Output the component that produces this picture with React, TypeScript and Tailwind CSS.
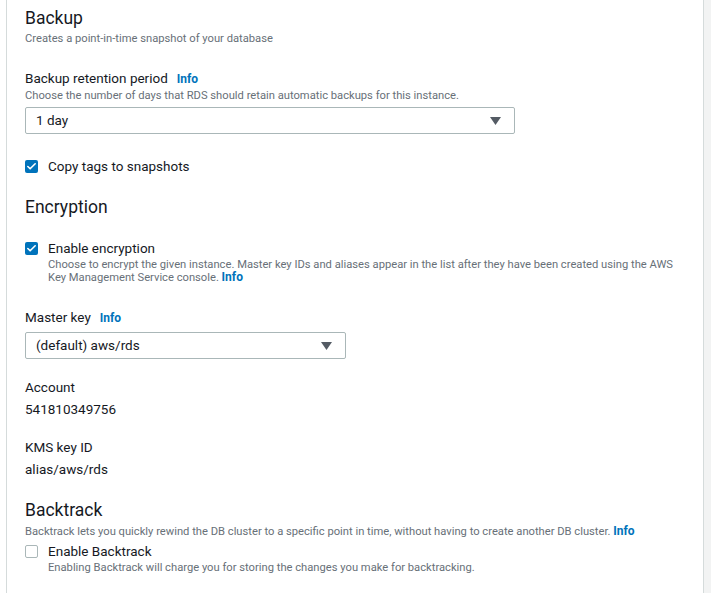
import { Check } from 'lucide-react'

const FONT = { fontFamily: 'Roboto, "Open Sans", Arial, sans-serif' }

function Info({ className = '' }: { className?: string }) {
  return <span className={`text-[12px] font-bold text-[#0073bb] ${className}`}>Info</span>
}

function Select({ value, width }: { value: string; width: string }) {
  return (
    <div
      className={`${width} h-[27px] border border-[#aab7b8] rounded-[2px] flex items-center pl-[10px] pr-[13px] text-[13.5px] text-[#16191f]`}
    >
      <span className="flex-1">{value}</span>
      <svg width="11" height="8" viewBox="0 0 11 8">
        <path d="M0 0 L11 0 L5.5 8 Z" fill="#545b64" />
      </svg>
    </div>
  )
}

function Checkbox({ checked }: { checked: boolean }) {
  return checked ? (
    <div className="w-[13px] h-[13px] rounded-[2px] bg-[#0073bb] flex items-center justify-center shrink-0">
      <Check size={11} strokeWidth={3.5} color="white" />
    </div>
  ) : (
    <div className="w-[13px] h-[13px] rounded-[2px] border border-[#aab7b8] bg-white shrink-0" />
  )
}

export default function App() {
  return (
    <div className="w-[711px] h-[593px] bg-[#f2f3f3] flex overflow-hidden" style={FONT}>
      <div className="w-[6px] bg-white" />
      <div className="w-[698px] h-full bg-white border-x border-[#d5dbdb] pl-[18px] text-[#16191f]">
        {/* Backup */}
        <h2 className="text-[17.5px] leading-[22px] mt-[7px]">Backup</h2>
        <p className="text-[11.2px] leading-[16px] text-[#687078] mt-[2px]">
          Creates a point-in-time snapshot of your database
        </p>

        <div className="mt-[22px] flex items-baseline gap-[9px] text-[13.5px] leading-[18px]">
          <span>Backup retention period</span>
          <Info />
        </div>
        <p className="text-[11.2px] leading-[16px] text-[#687078]">
          Choose the number of days that RDS should retain automatic backups for this instance.
        </p>
        <div className="mt-[3px]">
          <Select value="1 day" width="w-[490px]" />
        </div>

        <div className="mt-[23px] flex items-center gap-[10px] text-[13.5px] leading-[18px]">
          <Checkbox checked />
          <span>Copy tags to snapshots</span>
        </div>

        {/* Encryption */}
        <h2 className="text-[17.5px] leading-[22px] mt-[21px]">Encryption</h2>

        <div className="mt-[21px] flex items-start gap-[10px]">
          <div className="mt-[2.5px]">
            <Checkbox checked />
          </div>
          <div>
            <div className="text-[13.5px] leading-[18px]">Enable encryption</div>
            <p className="text-[11.2px] leading-[13px] text-[#687078] w-[640px] mt-[1px]">
              Choose to encrypt the given instance. Master key IDs and aliases appear in the list after they have been
              created using the AWS Key Management Service console. <Info />
            </p>
          </div>
        </div>

        <div className="mt-[24px] flex items-baseline gap-[9px] text-[13.5px] leading-[18px]">
          <span>Master key</span>
          <Info />
        </div>
        <div className="mt-[5px]">
          <Select value="(default) aws/rds" width="w-[321px]" />
        </div>

        <div className="mt-[19px] text-[13.5px] leading-[18px]">Account</div>
        <div className="mt-[4px] text-[13.5px] leading-[18px]">541810349756</div>

        <div className="mt-[20px] text-[13.5px] leading-[18px]">KMS key ID</div>
        <div className="mt-[4px] text-[13.5px] leading-[18px]">alias/aws/rds</div>

        {/* Backtrack */}
        <h2 className="text-[17.5px] leading-[22px] mt-[21px]">Backtrack</h2>
        <p className="text-[11.2px] leading-[16px] text-[#687078] mt-[2px]">
          Backtrack lets you quickly rewind the DB cluster to a specific point in time, without having to create another
          DB cluster. <Info />
        </p>
        <div className="mt-[2px] flex items-start gap-[10px]">
          <div className="mt-[2.5px]">
            <Checkbox checked={false} />
          </div>
          <div>
            <div className="text-[13.5px] leading-[18px]">Enable Backtrack</div>
            <p className="text-[11.2px] leading-[13px] text-[#687078] mt-[1px]">
              Enabling Backtrack will charge you for storing the changes you make for backtracking.
            </p>
          </div>
        </div>
      </div>
    </div>
  )
}
